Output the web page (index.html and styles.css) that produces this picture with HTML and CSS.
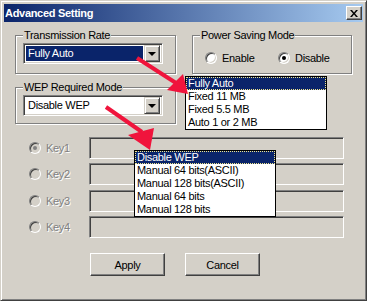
FILE: index.html
```html
<!DOCTYPE html>
<html lang="en">
<head>
    <meta charset="UTF-8">
    <title>Advanced Setting</title>
    <link rel="stylesheet" href="styles.css">
</head>
<body>
    <div class="window">
        <div class="titlebar">
            <span class="title">Advanced Setting</span>
            <span class="close-btn">
                <svg width="8" height="7" viewBox="0 0 8 7">
                    <path d="M0 0h2l2 2.5L6 0h2L5 3.5 8 7H6L4 4.5 2 7H0l3-3.5z" fill="#000"/>
                </svg>
            </span>
        </div>

        <div class="content">
            <div class="top-row">
                <div class="group group-rate">
                    <div class="group-title">Transmission Rate</div>
                    <div class="combo focused">
                        <span class="combo-text">Fully Auto</span>
                        <span class="combo-btn"><i class="tri"></i></span>
                    </div>
                </div>
                <div class="group group-power">
                    <div class="group-title">Power Saving Mode</div>
                    <div class="radio-row">
                        <div class="radio-item"><span class="radio"></span>Enable</div>
                        <div class="radio-item"><span class="radio checked"></span>Disable</div>
                    </div>
                </div>
            </div>

            <div class="group group-wep">
                <div class="group-title">WEP Required Mode</div>
                <div class="combo">
                    <span class="combo-text">Disable WEP</span>
                    <span class="combo-btn"><i class="tri"></i></span>
                </div>
            </div>

            <div class="keys">
                <div class="key-row">
                    <div class="key-label"><span class="radio disabled checked"></span>Key1</div>
                    <div class="key-field"></div>
                </div>
                <div class="key-row">
                    <div class="key-label"><span class="radio disabled"></span>Key2</div>
                    <div class="key-field"></div>
                </div>
                <div class="key-row">
                    <div class="key-label"><span class="radio disabled"></span>Key3</div>
                    <div class="key-field"></div>
                </div>
                <div class="key-row">
                    <div class="key-label"><span class="radio disabled"></span>Key4</div>
                    <div class="key-field"></div>
                </div>
            </div>

            <div class="buttons">
                <div class="btn">Apply</div>
                <div class="btn">Cancel</div>
            </div>
        </div>

        <!-- open drop-down lists shown over the dialog -->
        <ul class="dropdown list-rate">
            <li class="selected">Fully Auto</li>
            <li>Fixed 11 MB</li>
            <li>Fixed 5.5 MB</li>
            <li>Auto 1 or 2 MB</li>
        </ul>
        <ul class="dropdown list-wep">
            <li class="selected">Disable WEP</li>
            <li>Manual 64 bits(ASCII)</li>
            <li>Manual 128 bits(ASCII)</li>
            <li>Manual 64 bits</li>
            <li>Manual 128 bits</li>
        </ul>

        <svg class="arrows" width="367" height="301" viewBox="0 0 367 301">
            <line x1="136" y1="57" x2="175" y2="82" stroke="#f0143c" stroke-width="4"/>
            <polygon points="182,73 166,89 187,93" fill="#f0143c"/>
            <line x1="105" y1="106" x2="141" y2="131" stroke="#f0143c" stroke-width="4"/>
            <polygon points="127,134 153,127 149,149" fill="#f0143c"/>
        </svg>
    </div>
</body>
</html>
```

FILE: styles.css
```css
body {
    margin: 0;
    font-family: "Liberation Sans", Arial, sans-serif;
    font-size: 11px;
    letter-spacing: -0.3px;
    color: #000;
}
.window {
    position: relative;
    width: 367px;
    height: 301px;
    box-sizing: border-box;
    padding: 3px;
    background: #d4d0c8;
    border: 1px solid;
    border-color: #d4d0c8 #404040 #404040 #d4d0c8;
    box-shadow: inset 1px 1px 0 #fff, inset -1px -1px 0 #808080;
}
.titlebar {
    height: 18px;
    display: flex;
    align-items: flex-start;
    background: linear-gradient(to right, #0a246a, #a6caf0);
}
.title {
    flex: 1;
    padding-left: 1px;
    color: #fff;
    font-weight: bold;
    line-height: 18px;
    letter-spacing: -0.3px;
}
.close-btn {
    width: 16px;
    height: 14px;
    margin: 2px 1px 0 0;
    box-sizing: border-box;
    display: flex;
    align-items: center;
    justify-content: center;
    background: #d4d0c8;
    border: 1px solid;
    border-color: #fff #404040 #404040 #fff;
    box-shadow: inset -1px -1px 0 #808080;
}
.content {
    padding: 13px 0 0 11px;
}
.top-row {
    display: flex;
    gap: 16px;
}
.group {
    box-sizing: border-box;
    border: 1px solid #808080;
    box-shadow: 1px 1px 0 #fff, inset 1px 1px 0 #fff;
}
.group-title {
    width: fit-content;
    margin: -7px 0 0 7px;
    padding: 0 1px;
    line-height: 13px;
    background: #d4d0c8;
}
.group-rate {
    width: 161px;
    height: 39px;
}
.group-power {
    width: 160px;
    height: 39px;
}
.group-wep {
    width: 161px;
    height: 37px;
    margin-top: 13px;
}
.combo {
    width: 140px;
    height: 21px;
    margin: 1px 0 0 7px;
    box-sizing: border-box;
    display: flex;
    padding: 2px;
    background: #fff;
    border: 1px solid;
    border-color: #808080 #fff #fff #808080;
    box-shadow: inset 1px 1px 0 #404040, inset -1px -1px 0 #d4d0c8;
}
.combo-text {
    flex: 1;
    padding-left: 2px;
    line-height: 15px;
}
.combo.focused .combo-text {
    background: #0a246a;
    color: #fff;
    margin-right: 1px;
}
.combo-btn {
    width: 16px;
    margin: -1px 0;
    box-sizing: border-box;
    display: flex;
    align-items: center;
    justify-content: center;
    background: #d4d0c8;
    border: 1px solid;
    border-color: #d4d0c8 #404040 #404040 #d4d0c8;
    box-shadow: inset 1px 1px 0 #fff, inset -1px -1px 0 #808080;
}
.tri {
    width: 0;
    height: 0;
    border-left: 4px solid transparent;
    border-right: 4px solid transparent;
    border-top: 4px solid #000;
}
.radio-row {
    display: flex;
    height: 16px;
    margin-top: 8px;
    padding-left: 12px;
}
.radio-item {
    width: 75px;
    display: flex;
    align-items: center;
    gap: 5px;
}
.radio {
    position: relative;
    width: 12px;
    height: 12px;
    box-sizing: border-box;
    border-radius: 50%;
    background: #fff;
    border: 1px solid;
    border-color: #808080 #fff #fff #808080;
    box-shadow: inset 1px 1px 0 #404040, inset -1px -1px 0 #d4d0c8;
}
.radio.checked::after {
    content: "";
    position: absolute;
    left: 3px;
    top: 3px;
    width: 4px;
    height: 4px;
    border-radius: 50%;
    background: #000;
}
.radio.disabled {
    background: #d4d0c8;
}
.radio.disabled.checked::after {
    background: #808080;
}
.keys {
    margin-top: 13px;
    display: flex;
    flex-direction: column;
    gap: 4px;
}
.key-row {
    display: grid;
    grid-template-columns: 74px 255px;
    height: 22px;
}
.key-row:nth-child(3) {
    margin-top: 1px;
}
.key-label {
    display: flex;
    align-items: center;
    gap: 5px;
    padding-left: 14px;
    color: #808080;
    text-shadow: 1px 1px 0 #fff;
}
.key-field {
    box-sizing: border-box;
    border: 1px solid;
    border-color: #808080 #fff #fff #808080;
    box-shadow: inset 1px 1px 0 #404040, inset -1px -1px 0 #d4d0c8;
}
.buttons {
    display: flex;
    gap: 20px;
    margin: 15px 0 0 75px;
}
.btn {
    width: 75px;
    height: 23px;
    box-sizing: border-box;
    display: flex;
    align-items: center;
    justify-content: center;
    border: 1px solid;
    border-color: #fff #404040 #404040 #fff;
    box-shadow: inset -1px -1px 0 #808080;
}
.dropdown {
    position: absolute;
    width: 142px;
    margin: 0;
    padding: 0;
    list-style: none;
    box-sizing: border-box;
    background: #fff;
    border: 1px solid #000;
}
.dropdown li {
    height: 13px;
    line-height: 13px;
    padding-left: 2px;
}
.dropdown li.selected {
    background: #0a246a;
    color: #fff;
    outline: 1px dotted #f0e68c;
    outline-offset: -1px;
}
.list-rate {
    left: 184px;
    top: 75px;
}
.list-wep {
    left: 133px;
    top: 149px;
}
.arrows {
    position: absolute;
    left: 0;
    top: 0;
    pointer-events: none;
}
```
